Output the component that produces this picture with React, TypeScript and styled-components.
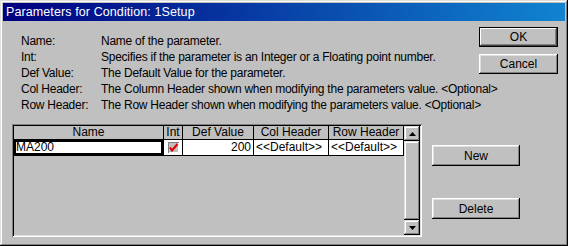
import React from "react";
import styled, { createGlobalStyle } from "styled-components";

const GlobalStyle = createGlobalStyle`
  html, body {
    margin: 0;
    padding: 0;
    background: #c0c0c0;
  }
  body {
    font-family: "Liberation Sans", Arial, sans-serif;
    font-size: 12px;
    color: #000;
  }
`;

const Window = styled.div`
  box-sizing: border-box;
  width: 568px;
  height: 246px;
  padding: 3px;
  background: #c0c0c0;
  display: flex;
  flex-direction: column;
  box-shadow: inset -1px -1px #000, inset 1px 1px #dfdfdf,
    inset -2px -2px #808080, inset 2px 2px #fff;
`;

const TitleBar = styled.div`
  height: 18px;
  display: flex;
  align-items: center;
  padding-left: 3px;
  background: linear-gradient(90deg, #000080, #1084d0);
  color: #fff;
  font-size: 12.5px;
  letter-spacing: 0.1px;
`;

const Top = styled.div`
  height: 103px;
  display: flex;
  padding: 6px 7px 0 18px;
  box-sizing: border-box;
`;

const HelpList = styled.div`
  flex: 1;
  min-width: 0;
  margin-top: 6px;
  display: grid;
  grid-template-columns: 80px auto;
  grid-auto-rows: 16px;
  align-items: center;
  align-content: start;
  white-space: nowrap;
  letter-spacing: -0.25px;
`;

const ButtonColumn = styled.div<{ $gap: number; $top?: number; $left?: number }>`
  flex: none;
  display: flex;
  flex-direction: column;
  gap: ${(p) => p.$gap}px;
  margin-top: ${(p) => p.$top ?? 0}px;
  margin-left: ${(p) => p.$left ?? 0}px;
`;

const Button = styled.button<{ $default?: boolean; $w: number; $h: number }>`
  box-sizing: border-box;
  width: ${(p) => p.$w}px;
  height: ${(p) => p.$h}px;
  padding: 0;
  font-family: "Liberation Sans", Arial, sans-serif;
  font-size: 12px;
  color: #000;
  background: #c0c0c0;
  border: none;
  box-shadow: ${(p) =>
    p.$default
      ? "inset 0 0 0 1px #000, inset -2px -2px #404040, inset 2px 2px #fff, inset -3px -3px #808080"
      : "inset -1px -1px #000, inset 1px 1px #fff, inset -2px -2px #808080, inset 2px 2px #dfdfdf"};
`;

const Bottom = styled.div`
  display: flex;
  padding-left: 9px;
`;

const GridFrame = styled.div`
  box-sizing: border-box;
  width: 410px;
  height: 113px;
  padding: 2px;
  display: flex;
  box-shadow: inset 1px 1px #808080, inset -1px -1px #fff,
    inset 2px 2px #000, inset -2px -2px #dfdfdf;
`;

const Table = styled.div`
  flex: 1;
  display: grid;
  grid-template-columns: 150px 19px 71px 75px 75px;
  grid-template-rows: 14px 16px;
  align-content: start;
`;

const HeaderCell = styled.div`
  box-sizing: border-box;
  border-right: 1px solid #000;
  border-bottom: 1px solid #000;
  background: #c0c0c0;
  text-align: center;
  line-height: 13px;
  font-size: 12px;
  white-space: nowrap;
  overflow: hidden;
`;

const Cell = styled.div<{ $align?: string; $focus?: boolean }>`
  box-sizing: border-box;
  background: #fff;
  border-right: 1px solid #000;
  border-bottom: 1px solid #000;
  line-height: 15px;
  padding: 0 2px;
  white-space: nowrap;
  overflow: hidden;
  display: flex;
  align-items: center;
  justify-content: ${(p) => (p.$align === "right" ? "flex-end" : p.$align === "center" ? "center" : "flex-start")};
  ${(p) => (p.$focus ? "box-shadow: inset 0 0 0 2px #000;" : "")}
`;

const ScrollBar = styled.div`
  width: 16px;
  display: flex;
  flex-direction: column;
`;

const ScrollButton = styled.div<{ $h?: number }>`
  box-sizing: border-box;
  height: ${(p) => p.$h ?? 15}px;
  display: flex;
  align-items: center;
  justify-content: center;
  background: #c0c0c0;
  box-shadow: inset -1px -1px #000, inset 1px 1px #dfdfdf,
    inset -2px -2px #808080, inset 2px 2px #fff;
`;

const Thumb = styled(ScrollButton)`
  flex: 1;
`;

const Arrow = ({ down }: { down?: boolean }) => (
  <svg width="7" height="4" viewBox="0 0 7 4">
    <polygon points={down ? "0,0 7,0 3.5,4" : "0,4 7,4 3.5,0"} fill="#000" />
  </svg>
);

const CheckBox = () => (
  <svg width="11" height="11" viewBox="0 0 11 11">
    <rect x="0" y="0" width="11" height="11" fill="#c0c0c0" />
    <path d="M0 10.5H10.5V0" stroke="#fff" fill="none" />
    <path d="M0.5 11V0.5H11" stroke="#808080" fill="none" />
    <path d="M2 5.5L4 8.5L9.5 2" stroke="#e00000" strokeWidth="2" fill="none" />
  </svg>
);

const help: [string, string][] = [
  ["Name:", "Name of the parameter."],
  ["Int:", "Specifies if the parameter is an Integer or a Floating point number."],
  ["Def Value:", "The Default Value for the parameter."],
  ["Col Header:", "The Column Header shown when modifying the parameters value. <Optional>"],
  ["Row Header:", "The Row Header shown when modifying the parameters value. <Optional>"],
];

const headers = ["Name", "Int", "Def Value", "Col Header", "Row Header"];

export default function App() {
  return (
    <>
      <GlobalStyle />
      <Window>
        <TitleBar>Parameters for Condition: 1Setup</TitleBar>
        <Top>
          <HelpList>
            {help.map(([k, v]) => (
              <React.Fragment key={k}>
                <span>{k}</span>
                <span>{v}</span>
              </React.Fragment>
            ))}
          </HelpList>
          <ButtonColumn $gap={7}>
            <Button $default $w={79} $h={20}>OK</Button>
            <Button $w={79} $h={20}>Cancel</Button>
          </ButtonColumn>
        </Top>
        <Bottom>
          <GridFrame>
            <Table>
              {headers.map((h) => (
                <HeaderCell key={h}>{h}</HeaderCell>
              ))}
              <Cell $focus>MA200</Cell>
              <Cell $align="center">
                <CheckBox />
              </Cell>
              <Cell $align="right">200</Cell>
              <Cell>&lt;&lt;Default&gt;&gt;</Cell>
              <Cell>&lt;&lt;Default&gt;&gt;</Cell>
            </Table>
            <ScrollBar>
              <ScrollButton>
                <Arrow />
              </ScrollButton>
              <Thumb />
              <ScrollButton>
                <Arrow down />
              </ScrollButton>
            </ScrollBar>
          </GridFrame>
          <ButtonColumn $gap={32} $top={21} $left={10}>
            <Button $w={88} $h={21}>New</Button>
            <Button $w={88} $h={21}>Delete</Button>
          </ButtonColumn>
        </Bottom>
      </Window>
    </>
  );
}
